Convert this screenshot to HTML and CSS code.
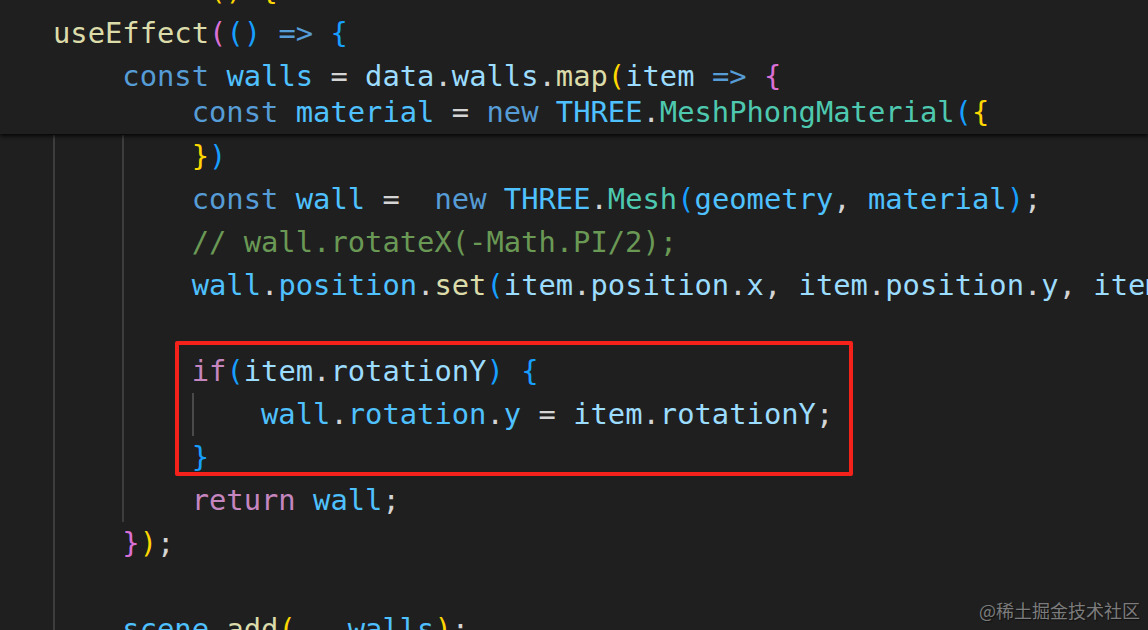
FILE: index.html
```html
<!DOCTYPE html>
<html lang="en">
<head>
<meta charset="utf-8">
<title>useEffect walls</title>
<link rel="stylesheet" href="styles.css">
</head>
<body>
<div class="editor">
  <div class="sticky">
    <div class="ln top"><span class="kw">function</span> <span class="fn">Wall</span><span class="b1">()</span> <span class="b1">{</span></div>
    <div class="ln"><span class="fn">useEffect</span><span class="b2">(</span><span class="b3">()</span> <span class="kw">=&gt;</span> <span class="b3">{</span></div>
    <div class="ln"><span class="pad"></span><span class="kw">const</span> <span class="cv">walls</span> <span class="p">=</span> <span class="vr">data</span><span class="p">.</span><span class="vr">walls</span><span class="p">.</span><span class="fn">map</span><span class="b1">(</span><span class="vr">item</span> <span class="kw">=&gt;</span> <span class="b2">{</span></div>
    <div class="ln push"><span class="pad"></span><span class="pad"></span><span class="kw">const</span> <span class="cv">material</span> <span class="p">=</span> <span class="kw">new</span> <span class="cv">THREE</span><span class="p">.</span><span class="ty">MeshPhongMaterial</span><span class="b3">(</span><span class="b1">{</span></div>
  </div>
  <div class="code">
    <div class="ln"><span class="g"></span><span class="g"></span><span class="b1">}</span><span class="b3">)</span></div>
    <div class="ln"><span class="g"></span><span class="g"></span><span class="kw">const</span> <span class="cv">wall</span> <span class="p">=</span>  <span class="kw">new</span> <span class="cv">THREE</span><span class="p">.</span><span class="ty">Mesh</span><span class="b3">(</span><span class="cv">geometry</span><span class="p">,</span> <span class="cv">material</span><span class="b3">)</span><span class="p">;</span></div>
    <div class="ln"><span class="g"></span><span class="g"></span><span class="cm">// wall.rotateX(-Math.PI/2);</span></div>
    <div class="ln"><span class="g"></span><span class="g"></span><span class="cv">wall</span><span class="p">.</span><span class="cv">position</span><span class="p">.</span><span class="fn">set</span><span class="b3">(</span><span class="vr">item</span><span class="p">.</span><span class="vr">position</span><span class="p">.</span><span class="vr">x</span><span class="p">,</span> <span class="vr">item</span><span class="p">.</span><span class="vr">position</span><span class="p">.</span><span class="vr">y</span><span class="p">,</span> <span class="vr">item</span><span class="p">.</span><span class="vr">position</span><span class="p">.</span><span class="vr">z</span><span class="b3">)</span><span class="p">;</span></div>
    <div class="ln"><span class="g"></span><span class="g"></span></div>
    <div class="block">
      <div class="ln"><span class="g"></span><span class="g"></span><span class="ctl">if</span><span class="b3">(</span><span class="vr">item</span><span class="p">.</span><span class="vr">rotationY</span><span class="b3">)</span> <span class="b3">{</span></div>
      <div class="ln"><span class="g"></span><span class="g"></span><span class="g gi"></span><span class="cv">wall</span><span class="p">.</span><span class="cv">rotation</span><span class="p">.</span><span class="cv">y</span> <span class="p">=</span> <span class="vr">item</span><span class="p">.</span><span class="vr">rotationY</span><span class="p">;</span></div>
      <div class="ln"><span class="g"></span><span class="g"></span><span class="b3">}</span></div>
    </div>
    <div class="ln"><span class="g"></span><span class="g"></span><span class="ctl">return</span> <span class="cv">wall</span><span class="p">;</span></div>
    <div class="ln"><span class="g"></span><span class="b2">}</span><span class="b1">)</span><span class="p">;</span></div>
    <div class="ln"><span class="g"></span></div>
    <div class="ln"><span class="g"></span><span class="cv">scene</span><span class="p">.</span><span class="fn">add</span><span class="b1">(</span><span class="p">...</span><span class="cv">walls</span><span class="b1">)</span><span class="p">;</span></div>
  </div>
  <div class="mark">@稀土掘金技术社区</div>
</div>
</body>
</html>
```
FILE: styles.css
```css
html, body {
  margin: 0;
  padding: 0;
  background: #1f1f1f;
}

.editor {
  position: relative;
  width: 1148px;
  height: 630px;
  overflow: hidden;
  background: #1f1f1f;
  font-family: "DejaVu Sans Mono", "Liberation Mono", monospace;
  font-size: 28.8px;
  line-height: 43px;
  color: #d4d4d4;
}

.sticky {
  position: relative;
  z-index: 2;
  height: 134px;
  overflow: hidden;
  background: #1f1f1f;
  box-shadow: 0 2px 4px rgba(0, 0, 0, 0.85);
}

.code {
  padding-top: 1px;
}

.ln {
  height: 43px;
  padding-left: 53px;
  white-space: pre;
}

.ln.top {
  margin-top: -31px;
  padding-left: 0;
  margin-left: -17px;
}

.ln.push {
  margin-top: -7px;
}

.pad,
.g {
  display: inline-block;
  width: 4ch;
  height: 43px;
  vertical-align: top;
  box-sizing: border-box;
}

.g {
  border-left: 2px solid #3d3d3d;
}

.g.gi {
  border-left-color: #4a4a4a;
}

.block {
  position: relative;
}

.block::after {
  content: "";
  position: absolute;
  left: 175px;
  top: -9px;
  width: 678px;
  height: 135px;
  box-sizing: border-box;
  border: 4px solid #f5221b;
  border-radius: 2px;
}

.kw { color: #569cd6; }
.ctl { color: #c586c0; }
.fn { color: #dcdcaa; }
.cv { color: #4fc1ff; }
.vr { color: #9cdcfe; }
.ty { color: #4ec9b0; }
.cm { color: #6a9955; }
.p { color: #d4d4d4; }
.b1 { color: #ffd700; }
.b2 { color: #da70d6; }
.b3 { color: #179fff; }

.mark {
  position: absolute;
  right: 8px;
  bottom: 8px;
  font-family: "Noto Sans CJK SC", "Noto Sans", sans-serif;
  font-size: 18px;
  line-height: 24px;
  color: #7c7c7c;
  text-shadow: 1px 1px 1px #111;
}
```
